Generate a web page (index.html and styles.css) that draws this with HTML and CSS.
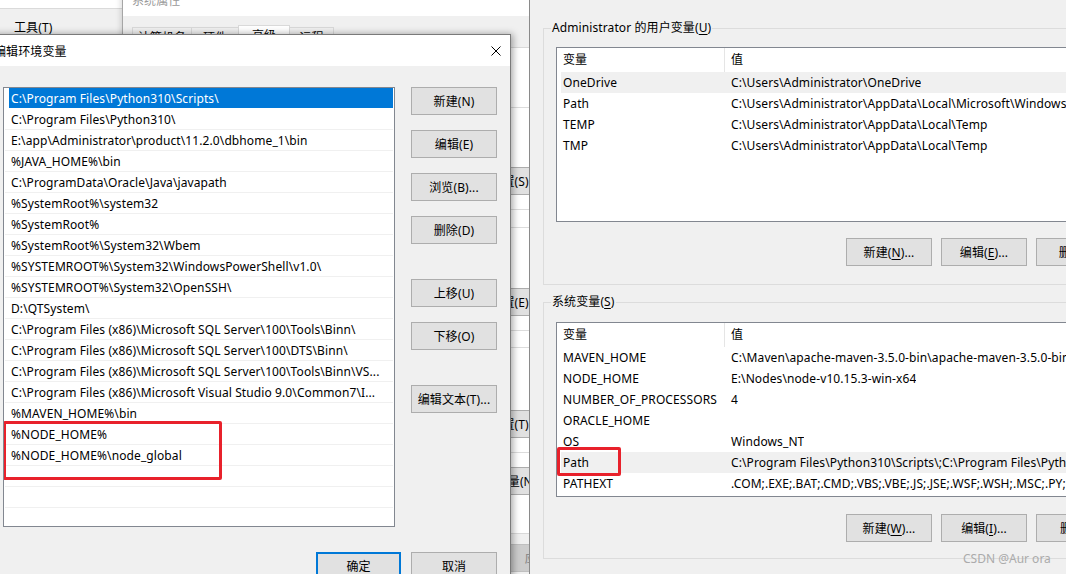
FILE: index.html
```html
<!DOCTYPE html>
<html lang="zh-CN">
<head>
<meta charset="utf-8">
<title>编辑环境变量</title>
<link rel="stylesheet" href="styles.css">
</head>
<body>
<div class="desktop">

  <div class="win app">
    <div class="app-top"></div>
    <div class="app-menu">工具(T)</div>
  </div>

  <div class="win sys">
    <div class="sys-title">系统属性</div>
    <div class="sys-tabs">
      <div class="tab t1">计算机名</div>
      <div class="tab t2">硬件</div>
      <div class="tab t3 active">高级</div>
      <div class="tab t4">远程</div>
    </div>
    <div class="sys-page">
      <div class="sys-group g1"><button class="btn sys-btn">设置(S)...</button></div>
      <div class="sys-group g2"><button class="btn sys-btn">设置(E)...</button></div>
      <div class="sys-group g3"><button class="btn sys-btn">设置(T)...</button></div>
      <div class="sys-envrow"><button class="btn sys-env">环境变量(N)...</button></div>
    </div>
    <div class="sys-foot"><button class="btn btn-disabled">应用(A)</button></div>
  </div>

  <div class="win env">
    <div class="group grp1">
      <div class="group-label">Administrator 的用户变量(<u>U</u>)</div>
      <div class="lv lv1">
        <div class="lv-head"><div class="lv-hc c1">变量</div><div class="lv-hc c2">值</div></div>
        <div class="lv-row hl"><div class="lv-c c1">OneDrive</div><div class="lv-c c2">C:\Users\Administrator\OneDrive</div></div>
        <div class="lv-row"><div class="lv-c c1">Path</div><div class="lv-c c2">C:\Users\Administrator\AppData\Local\Microsoft\WindowsApps;</div></div>
        <div class="lv-row"><div class="lv-c c1">TEMP</div><div class="lv-c c2">C:\Users\Administrator\AppData\Local\Temp</div></div>
        <div class="lv-row"><div class="lv-c c1">TMP</div><div class="lv-c c2">C:\Users\Administrator\AppData\Local\Temp</div></div>
      </div>
      <div class="group-btns">
        <button class="btn gbtn">新建(<u>N</u>)...</button>
        <button class="btn gbtn">编辑(<u>E</u>)...</button>
        <button class="btn gbtn">删除(<u>D</u>)</button>
      </div>
    </div>

    <div class="group grp2">
      <div class="group-label">系统变量(<u>S</u>)</div>
      <div class="lv lv2">
        <div class="lv-head"><div class="lv-hc c1">变量</div><div class="lv-hc c2">值</div></div>
        <div class="lv-row"><div class="lv-c c1">MAVEN_HOME</div><div class="lv-c c2">C:\Maven\apache-maven-3.5.0-bin\apache-maven-3.5.0-bin</div></div>
        <div class="lv-row"><div class="lv-c c1">NODE_HOME</div><div class="lv-c c2">E:\Nodes\node-v10.15.3-win-x64</div></div>
        <div class="lv-row"><div class="lv-c c1">NUMBER_OF_PROCESSORS</div><div class="lv-c c2">4</div></div>
        <div class="lv-row"><div class="lv-c c1">ORACLE_HOME</div><div class="lv-c c2"></div></div>
        <div class="lv-row"><div class="lv-c c1">OS</div><div class="lv-c c2">Windows_NT</div></div>
        <div class="lv-row hl"><div class="lv-c c1">Path</div><div class="lv-c c2">C:\Program Files\Python310\Scripts\;C:\Program Files\Python310\;</div></div>
        <div class="lv-row"><div class="lv-c c1">PATHEXT</div><div class="lv-c c2">.COM;.EXE;.BAT;.CMD;.VBS;.VBE;.JS;.JSE;.WSF;.WSH;.MSC;.PY;.PYW</div></div>
        <div class="annot annot-right"></div>
      </div>
      <div class="group-btns">
        <button class="btn gbtn">新建(<u>W</u>)...</button>
        <button class="btn gbtn">编辑(<u>I</u>)...</button>
        <button class="btn gbtn">删除(<u>L</u>)</button>
      </div>
    </div>
  </div>

  <div class="win dlg">
    <div class="dlg-title">
      <span class="dlg-title-text">编辑环境变量</span>
      <svg class="close" width="10" height="10" viewBox="0 0 10 10"><path d="M0.5 0.5 L9.5 9.5 M9.5 0.5 L0.5 9.5" stroke="#000" stroke-width="1" fill="none"/></svg>
    </div>
    <div class="dlg-body">
      <div class="dlg-main">
        <div class="listbox">
          <div class="lb-row sel">C:\Program Files\Python310\Scripts\</div>
          <div class="lb-row">C:\Program Files\Python310\</div>
          <div class="lb-row">E:\app\Administrator\product\11.2.0\dbhome_1\bin</div>
          <div class="lb-row">%JAVA_HOME%\bin</div>
          <div class="lb-row">C:\ProgramData\Oracle\Java\javapath</div>
          <div class="lb-row">%SystemRoot%\system32</div>
          <div class="lb-row">%SystemRoot%</div>
          <div class="lb-row">%SystemRoot%\System32\Wbem</div>
          <div class="lb-row">%SYSTEMROOT%\System32\WindowsPowerShell\v1.0\</div>
          <div class="lb-row">%SYSTEMROOT%\System32\OpenSSH\</div>
          <div class="lb-row">D:\QTSystem\</div>
          <div class="lb-row">C:\Program Files (x86)\Microsoft SQL Server\100\Tools\Binn\</div>
          <div class="lb-row">C:\Program Files (x86)\Microsoft SQL Server\100\DTS\Binn\</div>
          <div class="lb-row">C:\Program Files (x86)\Microsoft SQL Server\100\Tools\Binn\VS...</div>
          <div class="lb-row">C:\Program Files (x86)\Microsoft Visual Studio 9.0\Common7\I...</div>
          <div class="lb-row">%MAVEN_HOME%\bin</div>
          <div class="lb-row">%NODE_HOME%</div>
          <div class="lb-row">%NODE_HOME%\node_global</div>
          <div class="lb-row"></div>
          <div class="lb-row"></div>
          <div class="lb-row"></div>
          <div class="annot annot-left"></div>
        </div>
        <div class="dlg-side">
          <button class="btn sbtn">新建(N)</button>
          <button class="btn sbtn">编辑(E)</button>
          <button class="btn sbtn">浏览(B)...</button>
          <button class="btn sbtn">删除(D)</button>
          <button class="btn sbtn sgap">上移(U)</button>
          <button class="btn sbtn">下移(O)</button>
          <button class="btn sbtn sgap">编辑文本(T)...</button>
        </div>
      </div>
      <div class="dlg-foot">
        <button class="btn fbtn btn-default">确定</button>
        <button class="btn fbtn">取消</button>
      </div>
    </div>
  </div>

  <div class="watermark">CSDN @Aur ora</div>
</div>
</body>
</html>
```

FILE: styles.css
```css
* { box-sizing: border-box; margin: 0; padding: 0; }
html, body { width: 1066px; height: 574px; overflow: hidden; }
body {
  background: #f0f0f0;
  font-family: "Noto Sans", "Noto Sans CJK SC", sans-serif;
  font-size: 12px;
  letter-spacing: 0.1px;
  color: #000;
}
.desktop { position: relative; width: 1066px; height: 574px; overflow: hidden; }
.win { position: absolute; }

.btn {
  display: flex; align-items: center; justify-content: center;
  height: 28px;
  background: #e1e1e1;
  border: 1px solid #adadad;
  font: inherit; color: #000; letter-spacing: inherit;
  white-space: nowrap;
}
u { text-underline-offset: 2px; }

/* background application window */
.app { left: 0; top: 0; width: 124px; height: 574px; background: #f0f0f0; }
.app-top { height: 9px; background: #fff; border-bottom: 1px solid #dadada; }
.app-menu { margin-top: 9px; padding-left: 14px; line-height: 20px; }

/* system properties */
.sys {
  left: 122px; top: -15px; width: 470px; height: 620px;
  background: #f0f0f0;
  border-left: 1px solid #a6a6a6;
  box-shadow: -2px 0 5px rgba(0,0,0,.12);
}
.sys-title { height: 31px; background: #fff; padding-left: 9px; line-height: 31px; color: #9a9a9a; }
.sys-tabs { display: flex; align-items: flex-end; height: 31px; padding-left: 9px; }
.tab {
  height: 20px; border: 1px solid #d9d9d9; border-bottom: none;
  background: #f0f0f0; text-align: center; line-height: 20px; margin-right: -1px;
}
.tab.active { height: 22px; background: #fff; }
.t1 { width: 60px; } .t2 { width: 48px; } .t3 { width: 52px; } .t4 { width: 45px; }
.sys-page {
  margin: 0 10px; height: 487px;
  border: 1px solid #d9d9d9; background: #fff;
  padding-top: 59px;
}
.sys-group {
  margin: 0 9px; border: 1px solid #dcdcdc;
  display: flex; justify-content: flex-end; align-items: flex-start;
  padding-right: 19px;
}
.g1 { height: 103px; padding-top: 59px; }
.g2 { height: 104px; padding-top: 60px; margin-top: 17px; }
.g3 { height: 106px; padding-top: 62px; margin-top: 16px; }
.sys-btn { width: 75px; }
.sys-envrow { display: flex; justify-content: flex-end; padding-right: 29px; margin-top: 14px; }
.sys-env { width: 86px; }
.sys-foot { display: flex; justify-content: flex-end; padding-right: 10px; margin-top: 10px; }
.btn-disabled { width: 75px; background: #cccccc; border-color: #bfbfbf; color: #838383; }

/* environment variables window (right) */
.env {
  left: 529px; top: 0; width: 600px; height: 574px;
  background: #f0f0f0;
  border-left: 1px solid #8a8a8a;
  padding-left: 13px;
}
.group { border: 1px solid #dcdcdc; border-right: none; }
.grp1 { margin-top: 28px; padding-bottom: 18px; }
.grp2 { margin-top: 17px; padding-bottom: 16px; }
.group-label {
  width: fit-content; height: 18px; line-height: 18px;
  margin: -10px 0 0 7px; padding: 0 1px;
  background: #f0f0f0;
}
.lv {
  position: relative;
  margin-left: 12px; width: 600px; height: 175px;
  border: 1px solid #828790; background: #fff;
  overflow: hidden;
}
.lv1 { margin-top: 10px; }
.lv2 { margin-top: 11px; }
.lv-head { display: flex; height: 24px; }
.lv-hc { line-height: 24px; padding-left: 6px; }
.lv-hc.c1 { width: 168px; border-right: 1px solid #e5e5e5; }
.lv-row { display: flex; height: 21px; line-height: 21px; margin-left: 4px; white-space: nowrap; }
.lv-row.hl { background: #f0f0f0; }
.lv-c { padding-left: 2px; overflow: hidden; }
.lv-c.c1 { width: 168px; flex: none; }
.group-btns { display: flex; gap: 9px; padding-left: 302px; }
.grp1 .group-btns { margin-top: 16px; }
.grp2 .group-btns { margin-top: 17px; }
.gbtn { width: 86px; flex: none; }

/* edit environment variable dialog */
.dlg {
  left: -20px; top: 34px; width: 531px; height: 560px;
  background: #f0f0f0;
  border: 1px solid #7a7a7a;
  box-shadow: 2px 0 7px rgba(0,0,0,.35);
}
.dlg-title {
  height: 31px; background: #fff;
  display: flex; align-items: center; justify-content: space-between;
  padding: 0 9px 0 13px;
}
.close { display: block; }
.dlg-body { padding: 21px 13px 0 22px; }
.dlg-main { display: grid; grid-template-columns: 392px 86px; justify-content: space-between; }
.listbox {
  position: relative;
  width: 392px; height: 440px;
  border: 1px solid #828790; background: #fff;
  padding: 0 1px;
  overflow: hidden;
}
.lb-row {
  height: 21px; line-height: 21px;
  border-bottom: 1px solid #f0f0f0;
  padding-left: 6px;
  white-space: nowrap; overflow: hidden;
}
.lb-row.sel {
  background: linear-gradient(to right, #fff 4px, #0078d7 4px);
  color: #fff; border-bottom-color: #fff;
}
.dlg-side { display: flex; flex-direction: column; gap: 15px; }
.sbtn { width: 86px; }
.sgap { margin-top: 20px; }
.dlg-foot { display: flex; justify-content: flex-end; gap: 10px; margin-top: 25px; }
.fbtn { width: 86px; }
.btn-default { border: 2px solid #0078d7; width: 85px; }

/* red annotation frames */
.annot { position: absolute; border: 3px solid #e8212b; border-radius: 2px; }
.annot-left { left: -1px; top: 333px; width: 219px; height: 59px; }
.annot-right { left: 0; top: 124px; width: 64px; height: 29px; }

.watermark {
  position: absolute; left: 963px; top: 550px;
  font-size: 12px; line-height: 18px; color: #ababab; letter-spacing: 0;
}
```
